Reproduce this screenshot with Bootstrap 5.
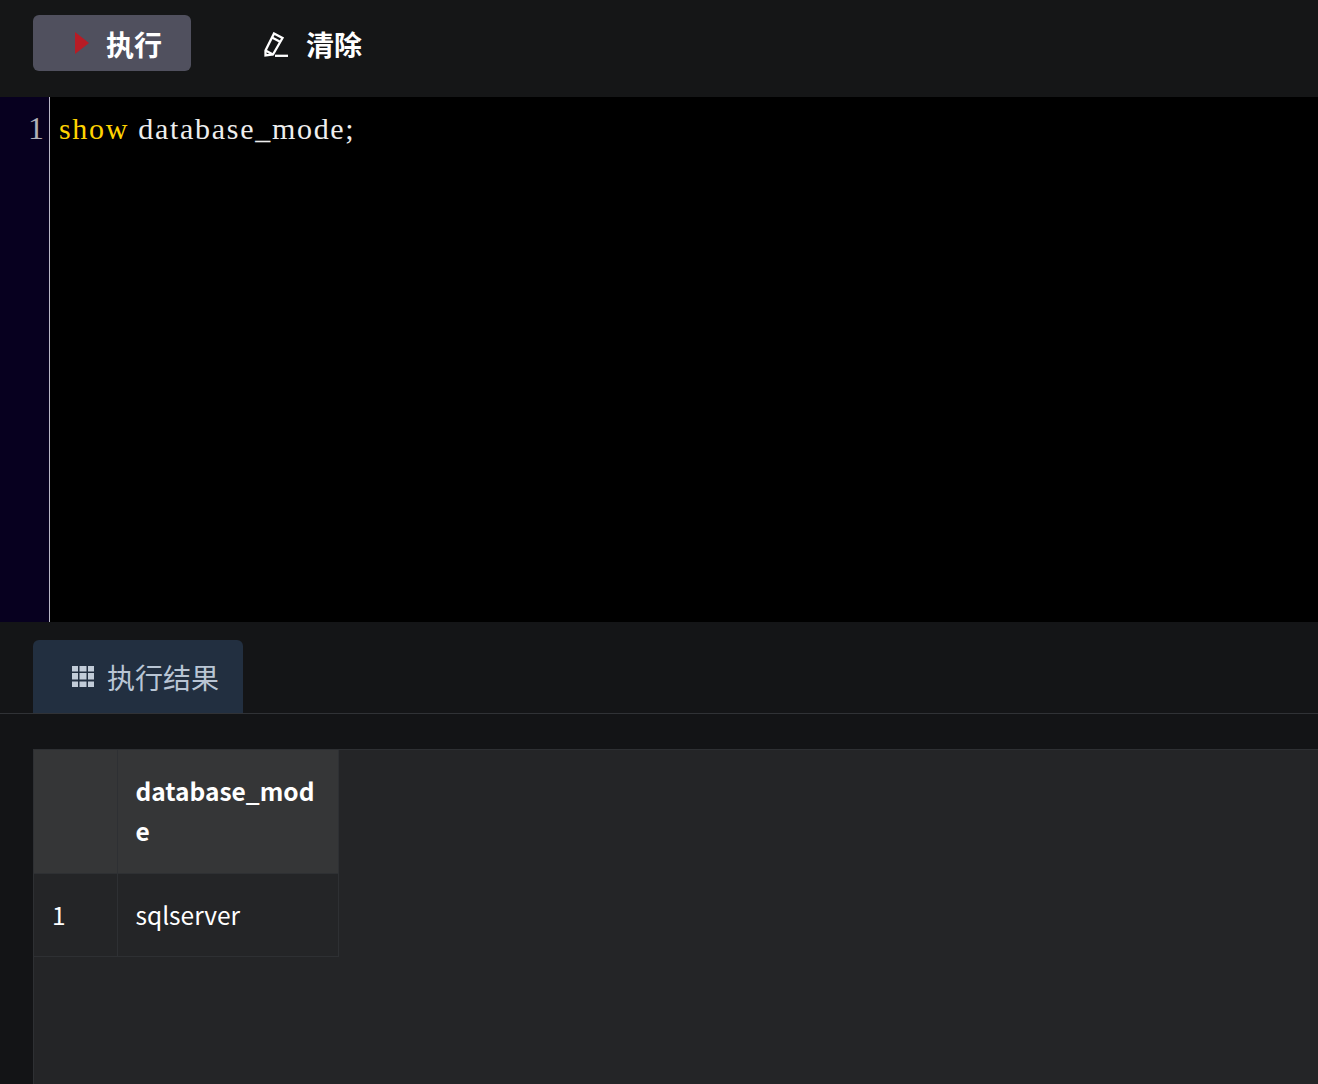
<!DOCTYPE html>
<html lang="zh">
<head>
<meta charset="utf-8">
<title>SQL</title>
<link href="https://cdn.jsdelivr.net/npm/bootstrap@5.3.0/dist/css/bootstrap.min.css" rel="stylesheet">
<style>
html,body{height:100%;}
body{background:#131416;color:#fff;overflow:hidden;font-family:"Noto Sans CJK SC","Noto Sans",sans-serif;}
.tool-bar{height:97px;background:#151617;padding:15px 33px;}
.run-btn,.clear-btn{height:56px;font-size:28px;font-weight:700;line-height:1;color:#fff;border:0;display:flex;align-items:center;}
.run-btn{width:158px;background:#50505e;border-radius:6px;padding:2px 0 0 42px;}
.run-btn:hover,.clear-btn:hover{color:#fff;}
.clear-btn{background:transparent;margin-left:73px;padding:2px 0 0 0;}
.run-btn svg{margin:-2px 17px 0 0;}
.clear-btn svg{margin:0 18px 0 0;}
.editor-pane{height:525px;background:#000;}
.gutter-col{width:50px;background:#07001f;border-right:1px solid #b9b6c6;color:#b0b0b8;text-align:right;padding:11px 5px 0 0;font:32px/40px "Liberation Serif",serif;}
.code-line{padding:12px 0 0 9px;font:30px/40px "Liberation Serif",serif;letter-spacing:1.7px;color:#eee;white-space:pre;}
.kw{color:#ffd400;}
.tab-bar{height:92px;padding-top:18px;border-bottom:1px solid #303236;background:#141517;padding-left:33px;}
.tab-item{width:210px;height:73px;background:#222f40;border-radius:6px 6px 0 0;color:#b9c5d4;font-size:28px;display:flex;align-items:center;padding-left:39px;}
.tab-item svg{margin-right:13px;}
.result-pane{margin:35px 0 0 33px;height:335px;background:#242527;border:1px solid #2e3033;border-width:1px 0 0 1px;}
.grid-table{border-collapse:collapse;width:305px;table-layout:fixed;font-size:24.5px;}
.grid-table th,.grid-table td{border:1px solid #2e3033;vertical-align:middle;padding:0 18px;line-height:40px;word-break:break-all;}
.grid-table th{background:#353637;height:123px;font-weight:700;}
.grid-table td{height:83px;background:#242527;}
.grid-table tr>:first-child{width:83px;border-left:0;}
.grid-table tr:first-child>*{border-top:0;}
</style>
</head>
<body>
<div class="tool-bar d-flex">
  <button class="btn run-btn" type="button">
    <svg width="14" height="22" viewBox="0 0 14 22"><path d="M0 0L14 11L0 22Z" fill="#b81c25"/></svg>执行
  </button>
  <button class="btn clear-btn" type="button">
    <svg width="24" height="25" viewBox="0 0 24 25" fill="none" stroke="#fff" stroke-width="2.300"><path d="M1.500 18.500L10 1.500L18.500 6L9 22.500L1.500 23.500Z"/><path d="M1.500 18.500L9 22.500M8 5.500L16.500 10"/><path d="M11 23.800H24"/></svg>清除
  </button>
</div>
<div class="editor-pane d-flex">
  <div class="gutter-col">1</div>
  <div class="code-line flex-grow-1"><span class="kw">show</span> database_mode;</div>
</div>
<div class="tab-bar">
  <div class="tab-item">
    <svg width="22" height="21" viewBox="0 0 22 21" fill="#c2ccd8"><path d="M0 0h6v5.500H0zM7.500 0h7v5.500h-7zM16 0h6v5.500h-6zM0 7h6v6.500H0zM7.500 7h7v6.500h-7zM16 7h6v6.500h-6zM0 15.500h6V21H0zM7.500 15.500h7V21h-7zM16 15.500h6V21h-6z"/></svg>执行结果
  </div>
</div>
<div class="result-pane">
  <table class="grid-table">
    <thead><tr><th></th><th>database_mode</th></tr></thead>
    <tbody><tr><td>1</td><td>sqlserver</td></tr></tbody>
  </table>
</div>
</body>
</html>
